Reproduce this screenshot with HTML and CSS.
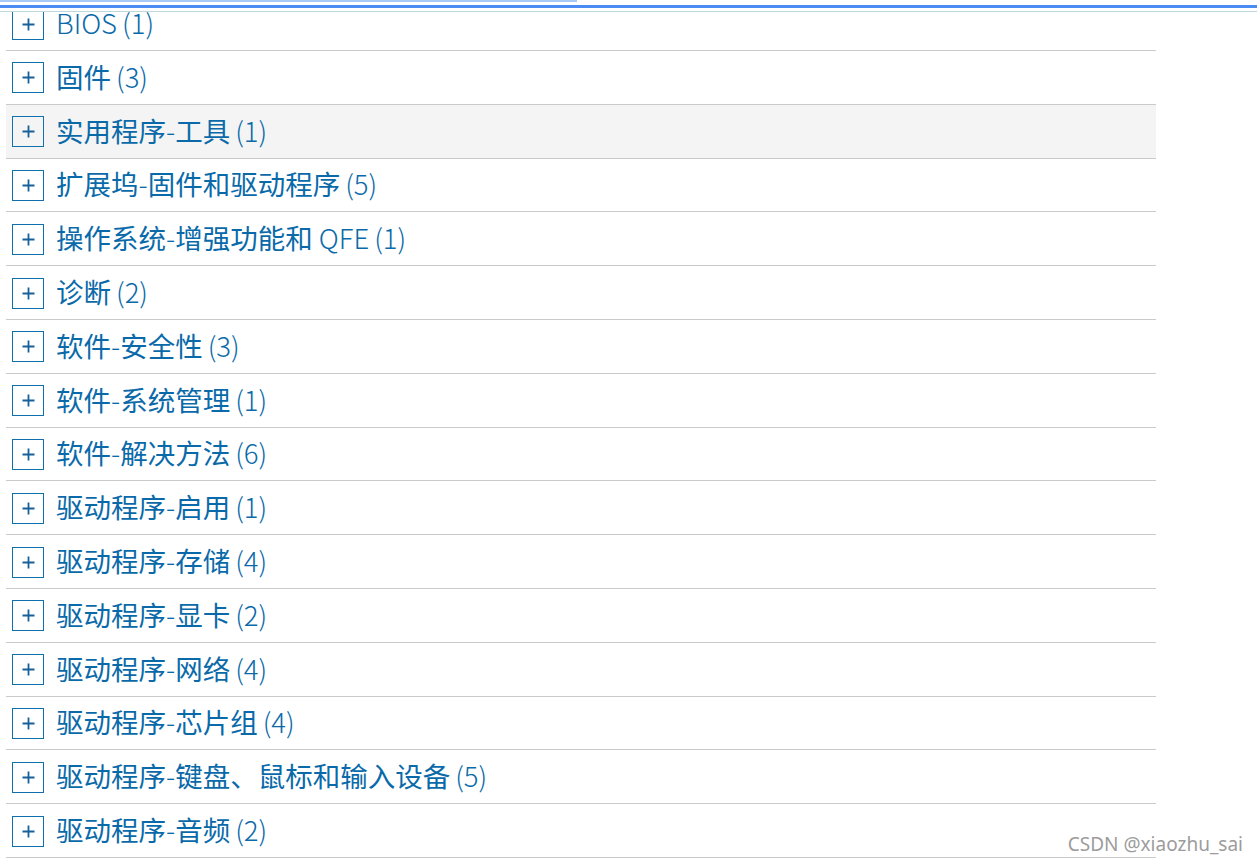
FILE: index.html
```html
<!DOCTYPE html>
<html lang="zh-CN">

<head>
    <meta charset="UTF-8">
    <meta name="viewport" content="width=device-width, initial-scale=1.0">
    <title>驱动程序和软件</title>
    <link rel="stylesheet" href="styles.css">
</head>

<body>

    <div class="top-lines">
        <div class="line-light"></div>
        <div class="line-blue"></div>
        <div class="line-teal"></div>
    </div>

    <div class="scroll-area">
        <ul class="category-list">
            <li class="category"><span class="toggle"><svg viewBox="0 0 13 13"><path d="M6.5 0.5v12M0.5 6.5h12" /></svg></span><span class="name"><span class="latin">BIOS</span></span><span class="count">(1)</span></li>
            <li class="category"><span class="toggle"><svg viewBox="0 0 13 13"><path d="M6.5 0.5v12M0.5 6.5h12" /></svg></span><span class="name">固件</span><span class="count">(3)</span></li>
            <li class="category hover"><span class="toggle"><svg viewBox="0 0 13 13"><path d="M6.5 0.5v12M0.5 6.5h12" /></svg></span><span class="name">实用程序<span class="latin">-</span>工具</span><span class="count">(1)</span></li>
            <li class="category"><span class="toggle"><svg viewBox="0 0 13 13"><path d="M6.5 0.5v12M0.5 6.5h12" /></svg></span><span class="name">扩展坞<span class="latin">-</span>固件和驱动程序</span><span class="count">(5)</span></li>
            <li class="category"><span class="toggle"><svg viewBox="0 0 13 13"><path d="M6.5 0.5v12M0.5 6.5h12" /></svg></span><span class="name">操作系统<span class="latin">-</span>增强功能和 <span class="latin">QFE</span></span><span class="count">(1)</span></li>
            <li class="category"><span class="toggle"><svg viewBox="0 0 13 13"><path d="M6.5 0.5v12M0.5 6.5h12" /></svg></span><span class="name">诊断</span><span class="count">(2)</span></li>
            <li class="category"><span class="toggle"><svg viewBox="0 0 13 13"><path d="M6.5 0.5v12M0.5 6.5h12" /></svg></span><span class="name">软件<span class="latin">-</span>安全性</span><span class="count">(3)</span></li>
            <li class="category"><span class="toggle"><svg viewBox="0 0 13 13"><path d="M6.5 0.5v12M0.5 6.5h12" /></svg></span><span class="name">软件<span class="latin">-</span>系统管理</span><span class="count">(1)</span></li>
            <li class="category"><span class="toggle"><svg viewBox="0 0 13 13"><path d="M6.5 0.5v12M0.5 6.5h12" /></svg></span><span class="name">软件<span class="latin">-</span>解决方法</span><span class="count">(6)</span></li>
            <li class="category"><span class="toggle"><svg viewBox="0 0 13 13"><path d="M6.5 0.5v12M0.5 6.5h12" /></svg></span><span class="name">驱动程序<span class="latin">-</span>启用</span><span class="count">(1)</span></li>
            <li class="category"><span class="toggle"><svg viewBox="0 0 13 13"><path d="M6.5 0.5v12M0.5 6.5h12" /></svg></span><span class="name">驱动程序<span class="latin">-</span>存储</span><span class="count">(4)</span></li>
            <li class="category"><span class="toggle"><svg viewBox="0 0 13 13"><path d="M6.5 0.5v12M0.5 6.5h12" /></svg></span><span class="name">驱动程序<span class="latin">-</span>显卡</span><span class="count">(2)</span></li>
            <li class="category"><span class="toggle"><svg viewBox="0 0 13 13"><path d="M6.5 0.5v12M0.5 6.5h12" /></svg></span><span class="name">驱动程序<span class="latin">-</span>网络</span><span class="count">(4)</span></li>
            <li class="category"><span class="toggle"><svg viewBox="0 0 13 13"><path d="M6.5 0.5v12M0.5 6.5h12" /></svg></span><span class="name">驱动程序<span class="latin">-</span>芯片组</span><span class="count">(4)</span></li>
            <li class="category"><span class="toggle"><svg viewBox="0 0 13 13"><path d="M6.5 0.5v12M0.5 6.5h12" /></svg></span><span class="name">驱动程序<span class="latin">-</span>键盘、鼠标和输入设备</span><span class="count">(5)</span></li>
            <li class="category"><span class="toggle"><svg viewBox="0 0 13 13"><path d="M6.5 0.5v12M0.5 6.5h12" /></svg></span><span class="name">驱动程序<span class="latin">-</span>音频</span><span class="count">(2)</span></li>
        </ul>
    </div>

    <div class="watermark">CSDN @xiaozhu_sai</div>

</body>

</html>
```

FILE: styles.css
```css
body {
    margin: 0;
    font-family: "Noto Sans CJK SC", sans-serif;
    background-color: #fff;
    overflow: hidden;
}

.top-lines {
    height: 12px;
}

.line-light {
    width: 577px;
    height: 2px;
    background-color: #a6c9f5;
}

.line-blue {
    margin-top: 3px;
    height: 3px;
    background-color: #4b8bf4;
}

.line-teal {
    margin-top: 3px;
    height: 1px;
    background-color: #bcd8dd;
}

.scroll-area {
    height: calc(100vh - 12px);
    overflow: hidden;
}

.category-list {
    list-style: none;
    margin: -14.8px 0 0 6px;
    padding: 0;
    width: 1150px;
}

.category {
    display: flex;
    align-items: center;
    height: 51.8px;
    padding-top: 1px;
    border-bottom: 1px solid #cacaca;
    box-sizing: content-box;
    color: #0a6aa9;
    font-size: 27.5px;
    line-height: 1.2;
    cursor: pointer;
}

.category.hover {
    background-color: #f4f4f4;
}

.toggle {
    display: flex;
    align-items: center;
    justify-content: center;
    width: 30px;
    height: 29px;
    margin: 0 12px 0 6px;
    border: 1px solid #1070ae;
    flex-shrink: 0;
}

.toggle svg {
    width: 13px;
    height: 13px;
    stroke: #17609a;
    stroke-width: 1.8;
    fill: none;
}

.name {
    font-weight: 400;
    margin-bottom: 3px;
}

.latin,
.count {
    font-weight: 300;
}

.count {
    margin-left: 5px;
    margin-bottom: 3px;
}

.watermark {
    position: absolute;
    right: 14px;
    bottom: 7px;
    font-family: "Noto Sans", sans-serif;
    font-size: 19px;
    color: #9c9c9c;
}
```
